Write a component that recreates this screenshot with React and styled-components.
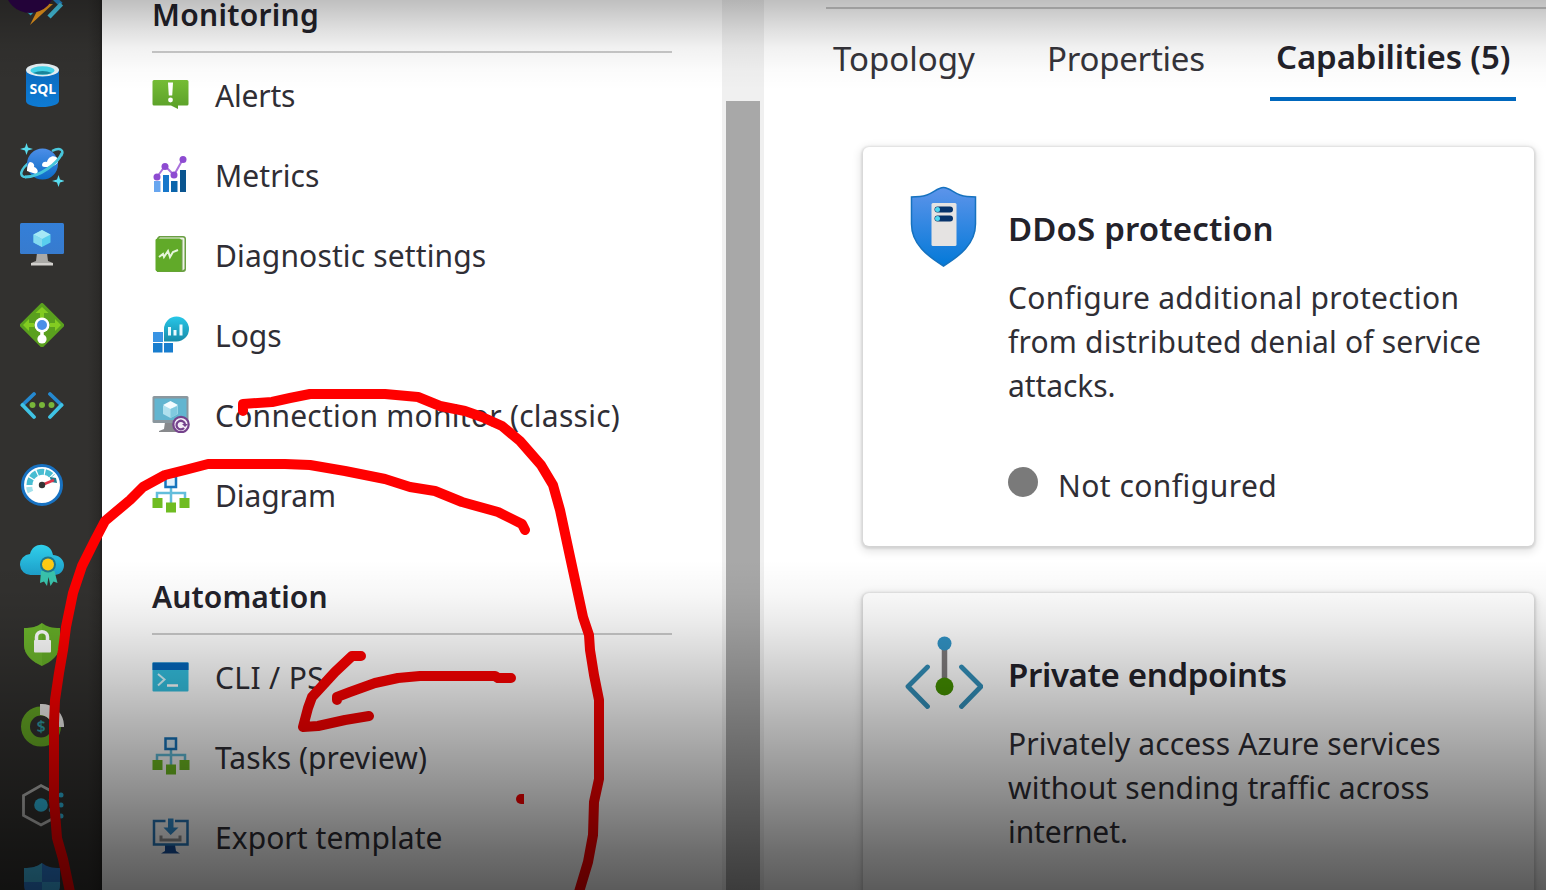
import React from "react";
import styled, { createGlobalStyle } from "styled-components";

const GlobalStyle = createGlobalStyle`
  * { box-sizing: border-box; }
  body {
    margin: 0;
    overflow: hidden;
    background: #fff;
    color: #2f2e35;
    font-family: "Noto Sans", "Open Sans", sans-serif;
  }
`;

const Screen = styled.div`
  position: relative;
  display: flex;
  width: 1546px;
  height: 890px;
  overflow: hidden;
  background: #fff;
`;

const Rail = styled.nav`
  display: flex;
  flex-direction: column;
  flex: none;
  width: 102px;
  height: 890px;
  overflow: hidden;
  background: linear-gradient(90deg, #32312f 0, #32312f 88px, #2b2a28 99px, #201f1e 102px);
`;

const RailSlot = styled.div`
  display: flex;
  flex: none;
  align-items: center;
  justify-content: center;
  width: 84px;
  height: 80px;
  &:first-child { margin-top: -35px; }
`;

const Menu = styled.aside`
  flex: none;
  width: 620px;
  height: 890px;
  padding: 0 50px;
  overflow: hidden;
`;

const MenuSection = styled.section`
  display: flex;
  flex-direction: column;
  &:first-child { margin-top: -46px; }
`;

const MenuHeading = styled.h2`
  flex: none;
  height: 99px;
  margin: 0 0 3px;
  padding-top: 41px;
  border-bottom: 2px solid #cbcbcb;
  font-size: 30px;
  font-weight: 600;
  line-height: 40px;
  color: #23222a;
  white-space: nowrap;
  letter-spacing: ${(p) => p.$track}px;
`;

const MenuItem = styled.div`
  display: flex;
  flex: none;
  align-items: center;
  gap: 25px;
  height: 80px;
  svg { flex: none; margin-top: -5px; }
`;

const ItemLabel = styled.span`
  font-size: 30px;
  line-height: 40px;
  white-space: nowrap;
  letter-spacing: ${(p) => p.$track}px;
`;

const ScrollTrack = styled.div`
  flex: none;
  width: 42px;
  height: 890px;
  padding: 101px 4px 0;
  background: #f0f0f0;
`;

const ScrollThumb = styled.div`
  height: 789px;
  background: #a8a8a8;
`;

const Main = styled.main`
  display: flex;
  flex-direction: column;
  flex: 1;
  min-width: 0;
  height: 890px;
  overflow: hidden;
`;

const TabBar = styled.div`
  display: flex;
  flex: none;
  height: 94px;
  margin: 7px 0 0 62px;
  border-top: 2px solid #cacaca;
`;

const Tab = styled.div`
  flex: none;
  width: ${(p) => p.$width}px;
  height: 92px;
  margin-right: ${(p) => p.$gap || 0}px;
  padding: ${(p) => (p.$active ? 26 : 28)}px 0 0 ${(p) => (p.$active ? 6 : 7)}px;
  border-bottom: ${(p) => (p.$active ? "4px solid #0067bd" : "0")};
  color: ${(p) => (p.$active ? "#23222a" : "#35343a")};
  font-size: 33px;
  font-weight: ${(p) => (p.$active ? 600 : 400)};
  line-height: 44px;
  letter-spacing: ${(p) => p.$track}px;
  white-space: nowrap;
`;

const Cards = styled.div`
  display: flex;
  flex-direction: column;
  gap: 47px;
  padding: 46px 12px 0 99px;
`;

const Card = styled.article`
  display: flex;
  flex: none;
  height: 399px;
  padding: 38px 0 0 42px;
  border-radius: 6px;
  background: #fff;
  box-shadow: 0 1px 2px 2px rgba(0, 0, 0, 0.09), 0 3px 9px 3px rgba(0, 0, 0, 0.1);
`;

const CardIcon = styled.div`
  flex: none;
  width: 78px;
  height: 84px;
`;

const CardBody = styled.div`
  padding: 22px 0 0 25px;
`;

const CardTitle = styled.h3`
  margin: 0 0 25px;
  font-size: 33px;
  font-weight: 600;
  line-height: 44px;
  color: #23222a;
  white-space: nowrap;
  letter-spacing: ${(p) => p.$track}px;
`;

const CardLine = styled.div`
  font-size: 30px;
  line-height: 44px;
  white-space: nowrap;
  letter-spacing: ${(p) => p.$track}px;
`;

const Status = styled.div`
  display: flex;
  align-items: center;
  gap: 20px;
  margin-top: 56px;
  font-size: 30px;
  line-height: 44px;
  letter-spacing: 0.45px;
`;

const StatusDot = styled.span`
  width: 30px;
  height: 30px;
  margin-top: -8px;
  border-radius: 50%;
  background: #7a7a7a;
`;

const Ink = styled.svg`
  position: absolute;
  inset: 0;
  fill: none;
  stroke: #f00;
  stroke-width: 10;
  stroke-linecap: round;
  stroke-linejoin: round;
`;

const Bubble = styled.div`
  position: absolute;
  top: -37px;
  left: 5px;
  width: 50px;
  height: 50px;
  border-radius: 50%;
  background: #230339;
`;

const Shade = styled.div`
  position: absolute;
  inset: 0;
  background:
    linear-gradient(180deg, rgba(0,0,0,.25) 0, rgba(0,0,0,.2) 12px, rgba(0,0,0,.12) 30px, rgba(0,0,0,.055) 48px, rgba(0,0,0,.015) 70px, transparent 90px),
    linear-gradient(180deg, transparent 560px, rgba(0,0,0,.03) 594px, rgba(0,0,0,.08) 622px, rgba(0,0,0,.16) 660px, rgba(0,0,0,.29) 718px, rgba(0,0,0,.44) 790px, rgba(0,0,0,.57) 850px, rgba(0,0,0,.645) 890px);
`;

const Svg = ({ w = 44, h = w, vb, children }) => (
  <svg width={w} height={h} viewBox={vb || `0 0 ${w} ${h}`} fill="none">{children}</svg>
);

const Gradient = ({ id, from, to }) => (
  <linearGradient id={id} x1="0" y1="0" x2="0" y2="1">
    <stop offset="0" stopColor={from} />
    <stop offset="1" stopColor={to} />
  </linearGradient>
);

const FunctionIcon = () => (
  <Svg>
    <path d="M3 22 12 31" stroke="#32bedd" strokeWidth="4" />
    <path d="m31 12 10 9.500" stroke="#2589d0" strokeWidth="4.500" />
    <path d="m29 34 12.500-13" stroke="#46c6e4" strokeWidth="4.500" />
    <path d="M26 5h12l-9 16h4L10 42l8-16h-8z" fill="#f09a1d" />
  </Svg>
);

const SqlIcon = () => (
  <Svg>
    <Gradient id="sql" from="#0a6bc0" to="#0e7bd4" />
    <path d="M6 6v32c0 3.500 7 6 16 6s17-2.500 17-6V6z" fill="url(#sql)" />
    <ellipse cx="22.500" cy="7" rx="16.500" ry="6.500" fill="#e4eef2" />
    <ellipse cx="22.500" cy="7.500" rx="12" ry="4.200" fill="#45d5ea" />
    <path d="M13 10q9.500-4 19 0-9 3-19 0" fill="#19869c" />
    <text x="22.800" y="31" textAnchor="middle" fill="#fff" fontFamily="Noto Sans, sans-serif" fontSize="14" fontWeight="700">SQL</text>
  </Svg>
);

const CosmosIcon = () => (
  <Svg>
    <Gradient id="cosmos" from="#4c8ee8" to="#0b6cc6" />
    <path d="M11 18C-1 27-1 34 6 34M32 8c8-4 13-1 9 5" stroke="#4bc8dc" strokeWidth="2.500" />
    <circle cx="22.500" cy="21" r="15.500" fill="url(#cosmos)" />
    <path d="M22 22c0-3 3-4 5-3 1-6 8-8 11-3 2 5-6 8-11 8-3 0-5 0-5-2M7 28c0-4 1-8 3-9 3 0 5 3 4 5 4 1 5 6 2 7z" fill="#fff" />
    <path d="M5 34C20 34 38 20 42 10" stroke="#46c6dc" strokeWidth="2.800" />
    <path d="M6.500 0 8 4.500l5 1.500-5 1.500L6.500 12 5 7.500 0 6l5-1.500zM38.500 32l1.500 4.500 5 1.500-5 1.500L38.500 44 37 39.500 32 38l5-1.500z" fill="#58dcee" />
  </Svg>
);

const VmIcon = () => (
  <Svg>
    <Gradient id="vm" from="#347fd8" to="#377bce" />
    <path d="M17 30h10l1 8 5 2v2H11v-2l5-2z" fill="#aaa9a6" />
    <path d="M11 40h22v2.500H11z" fill="#d2d0cd" />
    <rect x="0" y="0" width="44" height="31" rx="1.500" fill="url(#vm)" />
    <path d="m22 7 8.500 4.500v8L22 24l-8.500-4.500v-8z" fill="#59cfee" />
    <path d="m22 7 8.500 4.500L22 16l-8.500-4.500z" fill="#a6e8f6" />
    <path d="M22 16v8l-8.500-4.500v-8z" fill="#84daf0" />
  </Svg>
);

const LoadBalancerIcon = () => (
  <Svg>
    <path d="M20.500.8a2 2 0 0 1 3 0l20 20a2 2 0 0 1 0 3l-20 20a2 2 0 0 1-3 0l-20-20a2 2 0 0 1 0-3z" fill="#5aa01e" />
    <path d="M20 18v-8h-4.500L22 4l6.500 6H24v8zM14 20H9v-4l-6 6 6 6v-4h5zM30 20h5v-4l6 6-6 6v-4h-5z" fill="#83cc21" />
    <path d="M22 24v12" stroke="#fff" strokeWidth="3.500" />
    <circle cx="22" cy="36" r="4.600" fill="#fff" />
    <circle cx="22" cy="22" r="7.500" fill="#fff" />
    <circle cx="22" cy="22" r="5" fill="#4b8fe8" />
  </Svg>
);

const VnetIcon = () => (
  <Svg>
    <g strokeWidth="3.800" strokeLinecap="round">
      <path d="M14 11 2.500 22M30 11l11.500 11" stroke="#2589d0" />
      <path d="M2.500 22 14 34M41.500 22 30 34" stroke="#3fc3e4" />
    </g>
    <circle cx="12.500" cy="22" r="3" fill="#78b53a" />
    <circle cx="22" cy="22" r="3" fill="#78b53a" />
    <circle cx="31.500" cy="22" r="3" fill="#78b53a" />
  </Svg>
);

const MonitorIcon = () => (
  <Svg>
    <circle cx="22" cy="22" r="19.500" fill="#fff" stroke="#1872c2" strokeWidth="3" />
    <path d="M10.500 29a13 13 0 0 1-1.300-5" stroke="#a4e2ec" strokeWidth="6" />
    <path d="M9.500 22a13 13 0 0 1 23-8.500" stroke="#48bdd2" strokeWidth="6" strokeDasharray="6.500 1.300" />
    <path d="m30 14 6 1 1 5-6-1z" fill="#1f7d92" />
    <path d="m22 22 12-5" stroke="#df3549" strokeWidth="2.500" />
    <circle cx="22" cy="22" r="3.200" fill="#343434" />
  </Svg>
);

const AdvisorIcon = () => (
  <Svg>
    <Gradient id="adv" from="#30cfea" to="#1d9fca" />
    <path d="M11 32a10.500 10.500 0 0 1-1-21C13-2 31-1 33 12c5 0 11 4 11 10s-4 10-10 10z" fill="url(#adv)" />
    <path d="m21 28-1 12 4-1.500 3 4.500 1.500-9 2 9 3-4.500 4 1.500-3-12z" fill="#39c3ac" />
    <circle cx="28" cy="21.500" r="8" fill="#20768b" />
    <circle cx="28" cy="21.500" r="6" fill="#ffca13" />
  </Svg>
);

const SecurityIcon = () => (
  <Svg>
    <path d="M22 0c5 4 10 5 18 5v17c0 10-9 17-18 21C13 39 4 32 4 22V5c8 0 13-1 18-5" fill="#66af27" />
    <path d="M22 0C17 4 12 5 4 5v17c0 10 9 17 18 21z" fill="#71bd31" opacity=".6" />
    <path d="M16.500 18v-4c0-7 11-7 11 0v4" stroke="#fff" strokeWidth="3.500" />
    <rect x="14" y="17" width="17" height="12.500" rx="1" fill="#fff" />
  </Svg>
);

const CostIcon = () => (
  <Svg>
    <circle cx="21" cy="23.500" r="15.500" stroke="#68ac25" strokeWidth="9" />
    <path d="M20 1a22 22 0 0 1 24 23H32a12 12 0 0 0-12-12z" fill="#f1f0ee" />
    <text x="21" y="29" textAnchor="middle" fill="#309fa6" fontFamily="Noto Sans, sans-serif" fontSize="16" fontWeight="600">$</text>
  </Svg>
);

const HelpHubIcon = () => (
  <Svg>
    <path d="m35 10-14-7.500L3.500 12.500v20L21 42l14-7.500" stroke="#b9b9b7" strokeWidth="2.800" />
    <circle cx="21" cy="22" r="6.800" fill="#30b8de" />
    <circle cx="41" cy="12" r="2.500" fill="#30b8de" />
    <circle cx="41" cy="22" r="2.500" fill="#30b8de" />
    <circle cx="41" cy="33" r="2.500" fill="#30b8de" />
    <circle cx="31" cy="17" r="2.300" fill="#30b8de" />
    <circle cx="31" cy="27" r="2.300" fill="#30b8de" />
  </Svg>
);

const DefenderIcon = () => (
  <Svg>
    <path d="M22 0c5 4 10 5 18 5v17c0 10-9 17-18 21C13 39 4 32 4 22V5c8 0 13-1 18-5" fill="#2c7bd0" />
    <path d="M22 0v19H4V5c8 0 13-1 18-5" fill="#3fb4e0" />
    <path d="M22 19h18c1 13-9 21-18 24z" fill="#3aa9e2" />
  </Svg>
);

const AlertsIcon = () => (
  <Svg w={38} vb="0 0 38 38">
    <Gradient id="alert" from="#76bd36" to="#5a9f28" />
    <path d="M2 5h33a1.500 1.500 0 0 1 1.500 1.500V29A1.500 1.500 0 0 1 35 30.500H26V34l-7-3.500H2A1.500 1.500 0 0 1 .5 29V6.500A1.500 1.500 0 0 1 2 5" fill="url(#alert)" />
    <path d="M16 7.500h5l-.8 13h-3.400z" fill="#fff" />
    <circle cx="18.500" cy="25" r="2.400" fill="#fff" />
  </Svg>
);

const MetricsIcon = () => (
  <Svg w={38} vb="0 0 38 38">
    <path d="M2 26h6.500v11H2z" fill="#68a6ef" />
    <path d="M11 20h6v17h-6z" fill="#1677ca" />
    <path d="M19 26h6.500v11H19z" fill="#0b65ab" />
    <path d="M28 15h6v22h-6z" fill="#0a5590" />
    <path d="m5 22 8-11 9 9 9-16" stroke="#aa72dc" strokeWidth="2" />
    <g fill="#8d4bd1">
      <circle cx="5" cy="22" r="3.500" /><circle cx="13" cy="11.500" r="3.500" />
      <circle cx="22" cy="20" r="3.500" /><circle cx="31" cy="4.500" r="3.500" />
    </g>
  </Svg>
);

const DiagnosticIcon = () => (
  <Svg w={38} vb="0 0 38 38">
    <path d="M7 1h24a3 3 0 0 1 3 3v30a3 3 0 0 1-3 3H5V3z" fill="#6a9f43" />
    <path d="M8 2.500h23a1.500 1.500 0 0 1 1.500 1.500v30l-2 1.500V4.500H6z" fill="#eef1e8" />
    <path d="M3.500 5q0-1.500 2-1.500h22A1.500 1.500 0 0 1 29 5v30a1.500 1.500 0 0 1-1.500 1.500h-22a2 2 0 0 1-2-2z" fill="#61aa29" />
    <path d="m7 22 4-3 1 3 4-6 2 6 3-5 5-2" stroke="#e6f5da" strokeWidth="2" />
  </Svg>
);

const LogsIcon = () => (
  <Svg w={38} vb="0 0 38 38">
    <Gradient id="logs" from="#28c7e8" to="#178ba9" />
    <path d="M1 17h10v10H1z" fill="#3994e4" />
    <path d="M1 28h9.500v9.500H1zM12 28h9v9.500h-9z" fill="#187dce" />
    <path d="M12 26.500V14A12.500 12.500 0 1 1 24.500 26.500z" fill="url(#logs)" />
    <path d="M17.500 12v8.500M23 15v5.500M29 9.500v11" stroke="#eafaff" strokeWidth="3" />
  </Svg>
);

const ConnectionIcon = () => (
  <Svg w={38} vb="0 0 38 38">
    <path d="M13 27h9v7l4 2v1H7v-1l5-2z" fill="#87898c" />
    <rect x=".5" y="1" width="36" height="27" rx="1.500" fill="#8b979e" />
    <path d="M2.500 3.500h32v21.500h-32z" fill="#62b5d0" />
    <path d="m18.500 7 7.500 4v8l-7.500 4L11 19v-8z" fill="#afe0ee" />
    <path d="m18.500 6 7.500 4-7.500 4-7.500-4z" fill="#f3fcff" />
    <path d="M18.500 14v9l7-4v-8z" fill="#80c9df" />
    <circle cx="29" cy="29.500" r="7.700" fill="#f5edf7" stroke="#75438c" strokeWidth="2.200" />
    <path d="M32 33a4.300 4.300 0 1 1 1-4" stroke="#75438c" strokeWidth="2.300" />
    <path d="m30 29 6 0-3 3z" fill="#75438c" />
  </Svg>
);

const DiagramIcon = () => (
  <Svg w={38} vb="0 0 38 38">
    <path d="M19 12v16M5 23v-5h28v5" stroke="#62bedb" strokeWidth="2.500" />
    <rect x="13.500" y="1.500" width="10.500" height="10.500" fill="#e2f2fc" stroke="#1675bd" strokeWidth="2.500" />
    <path d="M.5 23h10v10H.5zM14 27.500h10v10H14zM27.500 23h10v10h-10z" fill="#6fbc22" />
  </Svg>
);

const CliIcon = () => (
  <Svg w={38} vb="0 0 38 38">
    <path d="M.5 5.500h36v28A1 1 0 0 1 35.500 34.500h-34a1 1 0 0 1-1-1z" fill="#34c0e0" />
    <path d="M.5 6.500a1 1 0 0 1 1-1h34a1 1 0 0 1 1 1V13H.5z" fill="#0568bd" />
    <path d="m6 17 6.500 5.500L6 28.500" stroke="#d8f8ff" strokeWidth="2" />
    <path d="M15 28.500h11" stroke="#fff" strokeWidth="2.500" />
  </Svg>
);

const ExportIcon = () => (
  <Svg w={38} vb="0 0 38 38">
    <path d="M13 28h10l1 6 4 2.500H9l4-2.500z" fill="#164e9a" />
    <path d="M13.500 4H2v23.500h33.500V4H23" stroke="#2878b9" strokeWidth="2.500" />
    <path d="M9 18.500v4.500h19v-4.500" stroke="#929292" strokeWidth="3" />
    <path d="M16 1.500h5.500v9h5L18.700 18 11.500 10.500H16z" fill="#348fd0" />
  </Svg>
);

const DdosIcon = () => (
  <Svg w={78} h={84}>
    <Gradient id="ddos" from="#5d94ea" to="#0379d8" />
    <path d="M38.500 2.500C31 2.500 27 11 15 11.500L6.500 12v27c0 20 16 32 32 42 16-10 32-22 32-42V12L62 11.500C50 11 46 2.500 38.500 2.500" fill="url(#ddos)" stroke="#1672bf" strokeWidth="1.500" />
    <rect x="26.500" y="18" width="25" height="43" rx="1.500" fill="#e5e3e2" />
    <rect x="29.500" y="21.500" width="18.500" height="6" rx="3" fill="#07336b" />
    <rect x="29.500" y="30.500" width="18.500" height="6" rx="3" fill="#07336b" />
    <circle cx="32.500" cy="24.500" r="2.500" fill="#50d8f0" />
    <circle cx="32.500" cy="33.500" r="2.500" fill="#50d8f0" />
  </Svg>
);

const EndpointIcon = () => (
  <Svg w={78} h={84}>
    <path d="M39.500 16v34" stroke="#7f7b7c" strokeWidth="5.500" />
    <circle cx="39.500" cy="12.500" r="7" fill="#3294c6" />
    <circle cx="39.500" cy="55.500" r="9" fill="#438f00" />
    <path d="M22.500 36 3 55.500l19.500 20M56.500 36 76 55.500l-19.500 20" stroke="#338fb9" strokeWidth="4.800" strokeLinecap="round" strokeLinejoin="round" />
  </Svg>
);

const railIcons = [
  FunctionIcon, SqlIcon, CosmosIcon, VmIcon, LoadBalancerIcon, VnetIcon,
  MonitorIcon, AdvisorIcon, SecurityIcon, CostIcon, HelpHubIcon, DefenderIcon,
];

const sections = [
  {
    title: "Monitoring", track: 0.3,
    items: [
      ["Alerts", AlertsIcon, -0.2],
      ["Metrics", MetricsIcon, 0.1],
      ["Diagnostic settings", DiagnosticIcon, 0.13],
      ["Logs", LogsIcon, 0],
      ["Connection monitor (classic)", ConnectionIcon, 0.25],
      ["Diagram", DiagramIcon, -0.1],
    ],
  },
  {
    title: "Automation", track: 0.1,
    items: [
      ["CLI / PS", CliIcon, 0.35],
      ["Tasks (preview)", DiagramIcon, 0.06],
      ["Export template", ExportIcon, 0.05],
    ],
  },
];

const cards = [
  {
    title: "DDoS protection", track: 0.15, Icon: DdosIcon, status: "Not configured",
    lines: [
      ["Configure additional protection", 0.3],
      ["from distributed denial of service", 0.18],
      ["attacks.", -0.1],
    ],
  },
  {
    title: "Private endpoints", track: -0.35, Icon: EndpointIcon,
    lines: [
      ["Privately access Azure services", 0.13],
      ["without sending traffic across", 0.16],
      ["internet.", -0.1],
    ],
  },
];

export default function App() {
  return (
    <Screen>
      <GlobalStyle />
      <Rail>
        {railIcons.map((Icon, i) => <RailSlot key={i}><Icon /></RailSlot>)}
      </Rail>
      <Menu>
        {sections.map((section) => (
          <MenuSection key={section.title}>
            <MenuHeading $track={section.track}>{section.title}</MenuHeading>
            {section.items.map(([label, Icon, track]) => (
              <MenuItem key={label}>
                <Icon />
                <ItemLabel $track={track}>{label}</ItemLabel>
              </MenuItem>
            ))}
          </MenuSection>
        ))}
      </Menu>
      <ScrollTrack><ScrollThumb /></ScrollTrack>
      <Main>
        <TabBar>
          <Tab $width={155} $gap={59} $track={0}>Topology</Tab>
          <Tab $width={168} $gap={62} $track={-0.25}>Properties</Tab>
          <Tab $width={246} $track={-0.12} $active>Capabilities (5)</Tab>
        </TabBar>
        <Cards>
          {cards.map(({ title, track, Icon, lines, status }) => (
            <Card key={title}>
              <CardIcon><Icon /></CardIcon>
              <CardBody>
                <CardTitle $track={track}>{title}</CardTitle>
                {lines.map(([line, lineTrack]) => (
                  <CardLine key={line} $track={lineTrack}>{line}</CardLine>
                ))}
                {status && <Status><StatusDot />{status}</Status>}
              </CardBody>
            </Card>
          ))}
        </Cards>
      </Main>
      <Ink width="1546" height="890" viewBox="0 0 1546 890">
        <path d="M243 411V404L272 402 290 398 310 394H385L418 397 440 406 465 411 482 417 502 426 520 441 541 465 553 485 560 510 569 552 583 617 589 635 590 650 594 675 599 700V779L594 802 593 835 588 862 579 892" />
        <path d="M525 530 522 524 498 512 462 502 435 491 410 487 385 479 345 471 310 465 285 464H208L185 470 165 475 143 487 130 500 105 521 95 540 82 566 73 593 66 627 63 650 59 673 55 700 54 723V800L57 838 63 859 70 892" />
        <path d="M361 656H352L335 672 312 697 308 708 303 727 318 726 345 720 369 716M511 678H498L495 676H420L398 678 375 683 350 692 337 697V700" />
        <path d="M524 794h-3a5 5 0 0 0 0 10h3z" fill="#f00" stroke="none" />
      </Ink>
      <Shade />
      <Bubble />
    </Screen>
  );
}
